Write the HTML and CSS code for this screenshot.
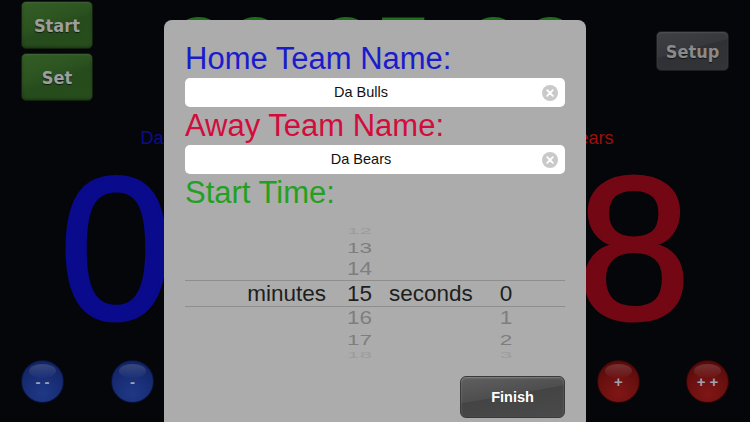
FILE: index.html
```html
<!DOCTYPE html>
<html>
<head>
<meta charset="utf-8">
<link rel="stylesheet" href="styles.css">
</head>
<body>
<div class="screen">
  <div class="top">
    <div class="ctrl-col">
      <div class="btn green">Start</div>
      <div class="btn green">Set</div>
    </div>
    <div class="clock">00:05:00</div>
    <div class="btn dark setup">Setup</div>
  </div>
  <div class="names">
    <div class="name home">Da Bulls</div>
    <div class="name away">Da Bears</div>
  </div>
  <div class="scores">
    <div class="score home">0</div>
    <div class="score away">8</div>
  </div>
  <div class="adjust">
    <div class="pair left">
      <div class="orb blue">- -</div>
      <div class="orb blue">-</div>
    </div>
    <div class="pair right">
      <div class="orb red">+</div>
      <div class="orb red">+ +</div>
    </div>
  </div>

  <div class="modal">
    <div class="label home-label">Home Team Name:</div>
    <div class="field">Da Bulls<span class="clear"><svg viewBox="0 0 16 16" width="16" height="16"><circle cx="8" cy="8" r="8" fill="#c9c9c9"/><path d="M5.2 5.2 L10.8 10.8 M10.8 5.2 L5.2 10.8" stroke="#fff" stroke-width="1.8" stroke-linecap="round"/></svg></span></div>
    <div class="label away-label">Away Team Name:</div>
    <div class="field">Da Bears<span class="clear"><svg viewBox="0 0 16 16" width="16" height="16"><circle cx="8" cy="8" r="8" fill="#c9c9c9"/><path d="M5.2 5.2 L10.8 10.8 M10.8 5.2 L5.2 10.8" stroke="#fff" stroke-width="1.8" stroke-linecap="round"/></svg></span></div>
    <div class="label time-label">Start Time:</div>
    <div class="picker">
      <div class="row r-far top-far"><span></span><span class="num">12</span><span></span><span class="num"></span></div>
      <div class="row r-mid"><span></span><span class="num">13</span><span></span><span class="num"></span></div>
      <div class="row r-near"><span></span><span class="num">14</span><span></span><span class="num"></span></div>
      <div class="row selected"><span class="unit">minutes</span><span class="num">15</span><span class="unit sec">seconds</span><span class="num">0</span></div>
      <div class="row r-near"><span></span><span class="num">16</span><span></span><span class="num">1</span></div>
      <div class="row r-mid"><span></span><span class="num">17</span><span></span><span class="num">2</span></div>
      <div class="row r-far bottom-far"><span></span><span class="num">18</span><span></span><span class="num">3</span></div>
    </div>
    <div class="finish-wrap"><div class="finish">Finish</div></div>
  </div>
</div>
</body>
</html>
```

FILE: styles.css
```css
html, body {
  margin: 0;
  padding: 0;
  background: #05060a;
}
.screen {
  position: relative;
  width: 750px;
  height: 422px;
  overflow: hidden;
  background: #05060a;
  font-family: "Liberation Sans", Arial, sans-serif;
  display: flex;
  flex-direction: column;
}
.top {
  height: 101px;
  box-sizing: border-box;
  padding-top: 1px;
  display: flex;
  align-items: flex-start;
}
.ctrl-col {
  margin-left: 21px;
  display: flex;
  flex-direction: column;
  gap: 4px;
}
.btn {
  box-sizing: border-box;
  display: flex;
  align-items: center;
  justify-content: center;
  font-family: "DejaVu Sans Condensed", "DejaVu Sans", sans-serif;
  font-stretch: condensed;
  font-weight: bold;
  font-size: 18px;
  color: #9e9e9e;
  border-radius: 5px;
  text-shadow: 0 1px 1px rgba(0,0,0,0.6);
}
.green {
  width: 72px;
  height: 48px;
  background: linear-gradient(160deg, #335e25 0%, #2c5420 40%, #264b1c 55%, #284e1d 100%);
  border: 1px solid #13220d;
  box-shadow: inset 0 1px 2px rgba(255,255,255,0.1), inset 0 -1px 3px rgba(0,0,0,0.35);
}
.clock {
  flex: 1;
  margin-top: 1px;
  text-align: center;
  font-size: 102px;
  line-height: 1;
  font-weight: bold;
  color: #1e6e1e;
  white-space: nowrap;
}
.dark.setup {
  width: 73px;
  height: 40px;
  margin-top: 30px;
  margin-right: 21px;
  background: linear-gradient(165deg, #3f4043 0%, #37383b 45%, #303134 46%, #333437 100%);
  border: 1px solid #1c1d20;
  color: #8a8a8a;
  box-shadow: inset 0 1px 2px rgba(255,255,255,0.1);
}
.names {
  margin-top: 28px;
  display: flex;
  justify-content: space-between;
}
.name {
  width: 348px;
  text-align: center;
  font-size: 18px;
  line-height: 18px;
}
.name.home { color: #0d0d8c; }
.name.away { color: #9c1010; }
.scores {
  margin-top: 1px;
  display: flex;
  justify-content: space-between;
}
.score {
  width: 232px;
  text-align: center;
  font-size: 205px;
  line-height: 200px;
  height: 200px;
}
.score.home { color: #0a0a8c; -webkit-text-stroke: 3px #0a0a8c; }
.score.away { color: #730814; -webkit-text-stroke: 3px #730814; }
.adjust {
  margin-top: 12px;
  display: flex;
  justify-content: space-between;
}
.pair {
  display: flex;
  gap: 47px;
}
.pair.left { margin-left: 21px; }
.pair.right { margin-right: 21px; gap: 46px; }
.orb {
  position: relative;
  width: 43px;
  height: 43px;
  box-sizing: border-box;
  border-radius: 50%;
  display: flex;
  align-items: center;
  justify-content: center;
  font-size: 15px;
  font-weight: bold;
  color: #9fa3ad;
  white-space: pre;
}
.orb::before {
  content: "";
  position: absolute;
  left: 7px;
  right: 7px;
  top: 3px;
  height: 14px;
  border-radius: 50%;
  background: linear-gradient(to bottom, rgba(255,255,255,0.16), rgba(255,255,255,0.01));
}
.orb.blue {
  background: radial-gradient(circle at 50% 80%, #1f3986 0%, #182c74 50%, #0f1f58 100%);
  border: 1px solid #081240;
}
.orb.red {
  background: radial-gradient(circle at 50% 80%, #801616 0%, #6a1010 50%, #4c0808 100%);
  border: 1px solid #360404;
}
.modal {
  position: absolute;
  left: 164px;
  top: 20px;
  width: 422px;
  height: 420px;
  box-sizing: border-box;
  padding: 22px 21px 0 21px;
  background: #acacac;
  border-radius: 8px;
  display: flex;
  flex-direction: column;
}
.label {
  font-size: 31px;
  line-height: 34px;
  height: 34px;
  white-space: nowrap;
}
.home-label { color: #1b1bcc; }
.away-label { color: #d20c3c; }
.time-label { color: #23a023; }
.field {
  position: relative;
  margin: 2px 0;
  height: 29px;
  box-sizing: border-box;
  padding-right: 28px;
  background: #fff;
  border-radius: 5px;
  text-align: center;
  font-size: 14.5px;
  line-height: 29px;
  color: #111;
}
.clear {
  position: absolute;
  right: 7px;
  top: 7px;
  width: 16px;
  height: 16px;
  line-height: 0;
}
.picker {
  margin-top: 12px;
  height: 140px;
  overflow: hidden;
  display: flex;
  flex-direction: column;
}
.row {
  display: grid;
  grid-template-columns: 149.5px 50px 96.5px 50px;
  font-size: 22.5px;
  overflow: hidden;
  color: #7e7e7e;
}
.row span {
  display: block;
  white-space: nowrap;
}
.row .num { text-align: center; }
.row.r-far { height: 15px; line-height: 15px; color: #9c9c9c; }
.row.top-far span { transform: scaleY(0.42); transform-origin: 50% 60%; }
.row.bottom-far { height: 12px; line-height: 12px; }
.row.bottom-far span { transform: scaleY(0.42); transform-origin: 50% 40%; }
.row.r-mid { height: 21px; line-height: 21px; }
.row.r-mid span { transform: scaleY(0.69); }
.row.r-near { height: 22px; line-height: 22px; }
.row.r-near span { transform: scaleY(0.8); }
.row.selected {
  height: 28px;
  line-height: 26px;
  box-sizing: border-box;
  border-top: 1px solid #8e8e8e;
  border-bottom: 1px solid #8e8e8e;
  color: #1e1e1e;
}
.row .unit { text-align: right; padding-right: 8.5px; }
.row .unit.sec { text-align: left; padding-left: 4.5px; padding-right: 0; }
.finish-wrap {
  margin-top: 14px;
  display: flex;
  justify-content: flex-end;
}
.finish {
  width: 105px;
  height: 42px;
  box-sizing: border-box;
  border-radius: 6px;
  border: 1px solid #3a3a3a;
  background: linear-gradient(170deg, #606060 0%, #4e4e4e 45%, #444 46%, #4a4a4a 100%);
  box-shadow: inset 0 1px 2px rgba(255,255,255,0.25);
  display: flex;
  align-items: center;
  justify-content: center;
  color: #fff;
  font-weight: bold;
  font-size: 14.5px;
}
```
